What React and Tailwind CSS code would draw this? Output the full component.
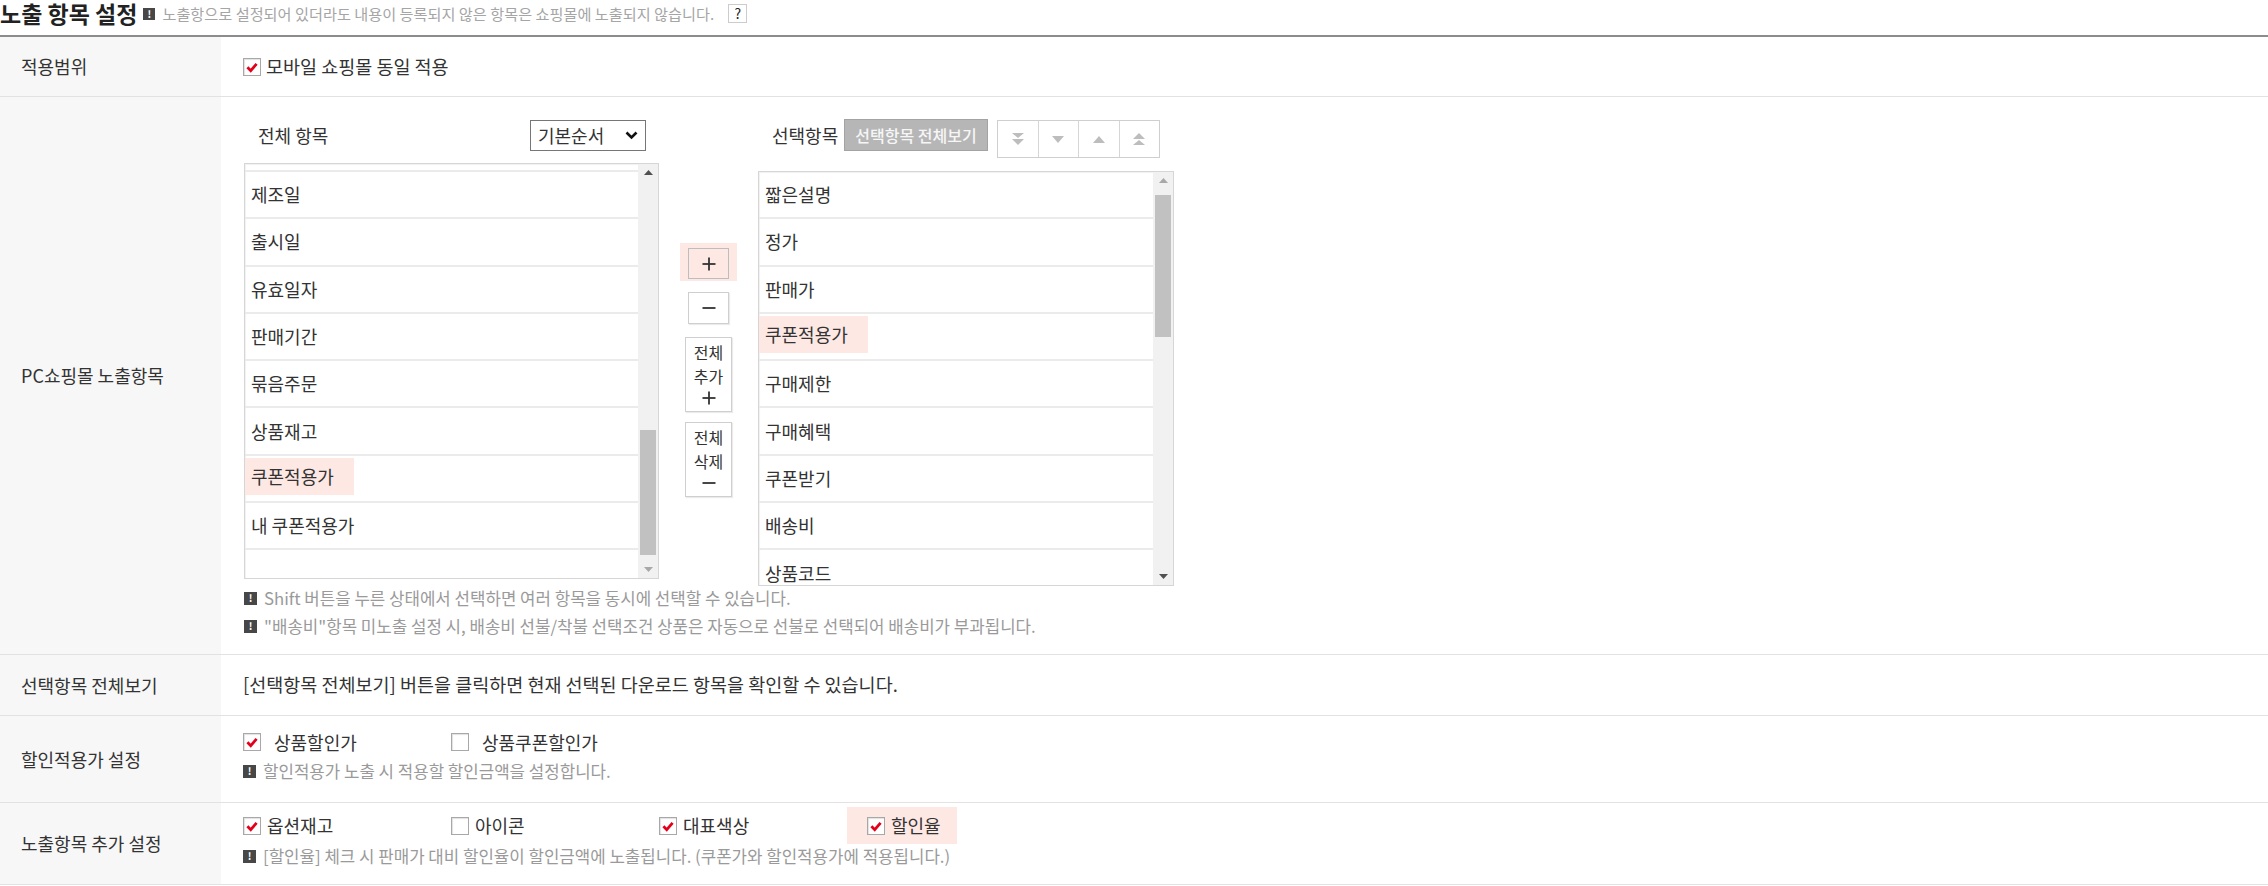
import React from 'react';

const FONT = "font-['Noto_Sans_CJK_KR','Noto_Sans',sans-serif]";

const leftItems = ['제조일', '출시일', '유효일자', '판매기간', '묶음주문', '상품재고', '쿠폰적용가', '내 쿠폰적용가'];
const rightItems = ['짧은설명', '정가', '판매가', '쿠폰적용가', '구매제한', '구매혜택', '쿠폰받기', '배송비', '상품코드'];

const Check = ({ on }) => (
    <span className="flex h-[18px] w-[18px] shrink-0 items-center justify-center border border-[#a8a8a8] bg-white shadow-[inset_1px_1px_1px_rgba(0,0,0,0.12)]">
        {on && (
            <svg width="16" height="16" viewBox="0 0 15 15">
                <path d="M3.2 7.8 L6.3 11 L11.8 4.6" fill="none" stroke="#e2001a" strokeWidth="2.6" strokeLinejoin="miter" />
            </svg>
        )}
    </span>
);

const Bang = ({ size = 'w-[13px] h-[13px]' }) => (
    <span className={`flex shrink-0 items-center justify-center bg-[#474747] text-[10px] font-bold leading-none text-white ${size}`}>!</span>
);

const Tri = ({ up, color }) => (
    <svg width="9" height="5" viewBox="0 0 9 5">
        <path d={up ? 'M0 5 L4.5 0 L9 5 Z' : 'M0 0 L4.5 5 L9 0 Z'} fill={color} />
    </svg>
);

// plus / minus drawn as icons
const Sign = ({ plus }) => (
    <svg width="14" height="14" viewBox="0 0 14 14">
        <path d="M0.5 7 H13.5" stroke="#333" strokeWidth="1.8" />
        {plus && <path d="M7 0.5 V13.5" stroke="#333" strokeWidth="1.8" />}
    </svg>
);

const Scrollbar = ({ before, thumb, upColor, downColor }) => (
    <div className="flex w-[20px] shrink-0 flex-col bg-[#f1f1f1]">
        <div className="flex h-[17px] items-center justify-center"><Tri up color={upColor} /></div>
        <div style={{ height: before }} />
        <div className="mx-[2px] bg-[#c1c1c1]" style={{ height: thumb }} />
        <div className="flex-1" />
        <div className="flex h-[17px] items-center justify-center"><Tri color={downColor} /></div>
    </div>
);

const ListRow = ({ text, hot }) => (
    <div className="flex h-[47.3px] shrink-0 items-center border-b-2 border-[#ebebeb]">
        {hot ? (
            <span className="-mt-[4px] flex h-[37px] items-center bg-[#fde8e4] pl-[6px] pr-[20px]">{text}</span>
        ) : (
            <span className="pl-[6px]">{text}</span>
        )}
    </div>
);

const ArrowIcon = ({ kind }) => {
    const c = '#bdbdbd';
    if (kind === 'bottom') {
        return (
            <svg width="12" height="12" viewBox="0 0 12 12">
                <path d="M0 0 L12 0 L6 5 Z" fill={c} />
                <path d="M0 6 L12 6 L6 12 Z" fill={c} />
            </svg>
        );
    }
    if (kind === 'top') {
        return (
            <svg width="12" height="12" viewBox="0 0 12 12">
                <path d="M0 6 L12 6 L6 0 Z" fill={c} />
                <path d="M0 12 L12 12 L6 7 Z" fill={c} />
            </svg>
        );
    }
    return (
        <svg width="12" height="7" viewBox="0 0 12 7">
            <path d={kind === 'up' ? 'M0 7 L6 0 L12 7 Z' : 'M0 0 L6 7 L12 0 Z'} fill={c} />
        </svg>
    );
};

const SideButton = ({ children, className = '' }) => (
    <div className={`flex flex-col items-center justify-center border border-[#cfcfcf] bg-white text-[16px] leading-[23.5px] text-[#333] shadow-[1px_1px_1px_rgba(0,0,0,0.08)] ${className}`}>
        {children}
    </div>
);

const Row = ({ label, h, children }) => (
    <div className={`flex border-b border-[#e2e2e2] ${h}`}>
        <div className="flex w-[221px] shrink-0 items-center bg-[#f7f7f7] pl-[21px] text-[18px] text-[#333]">{label}</div>
        <div className="flex-1">{children}</div>
    </div>
);

const CheckItem = ({ on, text, gap = 'gap-[7px]', w = 'w-[208px]' }) => (
    <label className={`flex items-center ${gap} ${w}`}>
        <Check on={on} />
        <span>{text}</span>
    </label>
);

export default function App() {
    return (
        <div className={`${FONT} w-full bg-white text-[#333]`}>
            {/* title */}
            <div className="flex h-[37px] items-start border-b-2 border-[#8c8c8c]">
                <div className="flex h-[27px] items-center">
                    <h2 className="text-[23px] font-bold leading-[27px] text-[#222]">노출 항목 설정</h2>
                    <Bang size="ml-[6px] w-[12px] h-[12px] text-[9px]" />
                    <span className="ml-[7px] text-[15.2px] text-[#a5a5a5]">노출항으로 설정되어 있더라도 내용이 등록되지 않은 항목은 쇼핑몰에 노출되지 않습니다.</span>
                    <span className="ml-[14px] flex h-[19px] w-[19px] items-center justify-center border border-[#cccccc] text-[14px] text-[#222]">?</span>
                </div>
            </div>

            <Row label="적용범위" h="h-[60px]">
                <div className="flex h-full items-center pl-[22px] text-[18.5px]">
                    <CheckItem on text="모바일 쇼핑몰 동일 적용" gap="gap-[5px]" w="" />
                </div>
            </Row>

            <Row label="PC쇼핑몰 노출항목" h="h-[558px]">
                <div className="pl-[23px] pt-[23px] text-[18px]">
                    <div className="flex items-start">
                        {/* all items */}
                        <div className="w-[415px]">
                            <div className="flex h-[31px] items-center justify-between">
                                <span className="pl-[14px]">전체 항목</span>
                                <div className="mr-[13px] flex h-[31px] w-[116px] items-center justify-between border border-[#767676] px-[7px]">
                                    <span>기본순서</span>
                                    <svg width="13" height="9" viewBox="0 0 13 9">
                                        <path d="M1.5 1.5 L6.5 6.5 L11.5 1.5" fill="none" stroke="#111" strokeWidth="2.6" />
                                    </svg>
                                </div>
                            </div>
                            <div className="mt-[12px] flex h-[416px] border border-[#d6d6d6] shadow-[inset_1px_1px_1px_rgba(0,0,0,0.06)]">
                                <div className="flex flex-1 flex-col overflow-hidden">
                                    <div className="h-[8px] shrink-0 border-b-2 border-[#ebebeb]" />
                                    {leftItems.map((t) => (
                                        <ListRow key={t} text={t} hot={t === '쿠폰적용가'} />
                                    ))}
                                </div>
                                <Scrollbar before={249} thumb={125} upColor="#505050" downColor="#a8a8a8" />
                            </div>
                        </div>

                        {/* move buttons */}
                        <div className="flex w-[99px] flex-col items-center pt-[123px]">
                            <div className="bg-[#fde8e4] px-[8px] pb-[2px] pt-[5px]">
                                <div className="flex h-[31px] w-[41px] items-center justify-center border border-[#bdbdbd]">
                                    <Sign plus />
                                </div>
                            </div>
                            <SideButton className="mt-[11px] h-[32px] w-[41px]">
                                <Sign />
                            </SideButton>
                            <SideButton className="mt-[13px] h-[75px] w-[47px]">
                                <span>전체</span>
                                <span>추가</span>
                                <span className="flex h-[20px] items-center"><Sign plus /></span>
                            </SideButton>
                            <SideButton className="mt-[10px] h-[75px] w-[47px]">
                                <span>전체</span>
                                <span>삭제</span>
                                <span className="flex h-[20px] items-center"><Sign /></span>
                            </SideButton>
                        </div>

                        {/* selected items */}
                        <div className="w-[416px]">
                            <div className="flex h-[38px] items-start">
                                <span className="w-[86px] shrink-0 pl-[14px] leading-[31px]">선택항목</span>
                                <span className="-mt-[1px] flex h-[32px] w-[144px] items-center justify-center border border-[#a3a3a3] bg-[#b6b6b6] text-[16px] font-medium text-[#f6f6f6]">선택항목 전체보기</span>
                                <div className="ml-[9px] flex h-[38px] w-[163px] border border-[#cfcfcf] bg-white">
                                    {['bottom', 'down', 'up', 'top'].map((k, i) => (
                                        <div key={k} className={`flex flex-1 items-center justify-center ${i > 0 ? 'border-l border-[#d6d6d6]' : ''}`}>
                                            <ArrowIcon kind={k} />
                                        </div>
                                    ))}
                                </div>
                            </div>
                            <div className="mt-[13px] flex h-[415px] border border-[#d6d6d6] shadow-[inset_1px_1px_1px_rgba(0,0,0,0.06)]">
                                <div className="flex flex-1 flex-col overflow-hidden">
                                    {rightItems.map((t) => (
                                        <ListRow key={t} text={t} hot={t === '쿠폰적용가'} />
                                    ))}
                                </div>
                                <Scrollbar before={6} thumb={142} upColor="#a8a8a8" downColor="#505050" />
                            </div>
                        </div>
                    </div>

                    <div className="-mt-[2px] text-[16.8px] leading-[28px] text-[#9a9a9a]">
                        <div className="flex items-center gap-[7px]">
                            <Bang />
                            <span>Shift 버튼을 누른 상태에서 선택하면 여러 항목을 동시에 선택할 수 있습니다.</span>
                        </div>
                        <div className="flex items-center gap-[7px]">
                            <Bang />
                            <span>"배송비"항목 미노출 설정 시, 배송비 선불/착불 선택조건 상품은 자동으로 선불로 선택되어 배송비가 부과됩니다.</span>
                        </div>
                    </div>
                </div>
            </Row>

            <Row label="선택항목 전체보기" h="h-[61px]">
                <div className="flex h-full items-center pl-[22px] text-[18.5px]">
                    [선택항목 전체보기] 버튼을 클릭하면 현재 선택된 다운로드 항목을 확인할 수 있습니다.
                </div>
            </Row>

            <Row label="할인적용가 설정" h="h-[87px]">
                <div className="pl-[22px] pt-[13px] text-[18px]">
                    <div className="flex h-[26px] items-center">
                        <CheckItem on text="상품할인가" gap="gap-[13px]" />
                        <CheckItem text="상품쿠폰할인가" gap="gap-[13px]" />
                    </div>
                    <div className="mt-[4px] flex items-center gap-[7px] text-[16.8px] leading-[24px] text-[#9a9a9a]">
                        <Bang />
                        <span>할인적용가 노출 시 적용할 할인금액을 설정합니다.</span>
                    </div>
                </div>
            </Row>

            <Row label="노출항목 추가 설정" h="h-[82px]">
                <div className="pl-[22px] pt-[4px] text-[18px]">
                    <div className="flex h-[37px] items-center">
                        <CheckItem on text="옵션재고" gap="gap-[6px]" />
                        <CheckItem text="아이콘" gap="gap-[6px]" />
                        <CheckItem on text="대표색상" gap="gap-[6px]" />
                        <div className="-ml-[20px] flex h-[37px] items-center bg-[#fde8e4] pl-[20px] pr-[16px]">
                            <CheckItem on text="할인율" gap="gap-[6px]" w="" />
                        </div>
                    </div>
                    <div className="flex items-center gap-[7px] text-[16.8px] leading-[24px] text-[#9a9a9a]">
                        <Bang />
                        <span>[할인율] 체크 시 판매가 대비 할인율이 할인금액에 노출됩니다. (쿠폰가와 할인적용가에 적용됩니다.)</span>
                    </div>
                </div>
            </Row>
        </div>
    );
}
